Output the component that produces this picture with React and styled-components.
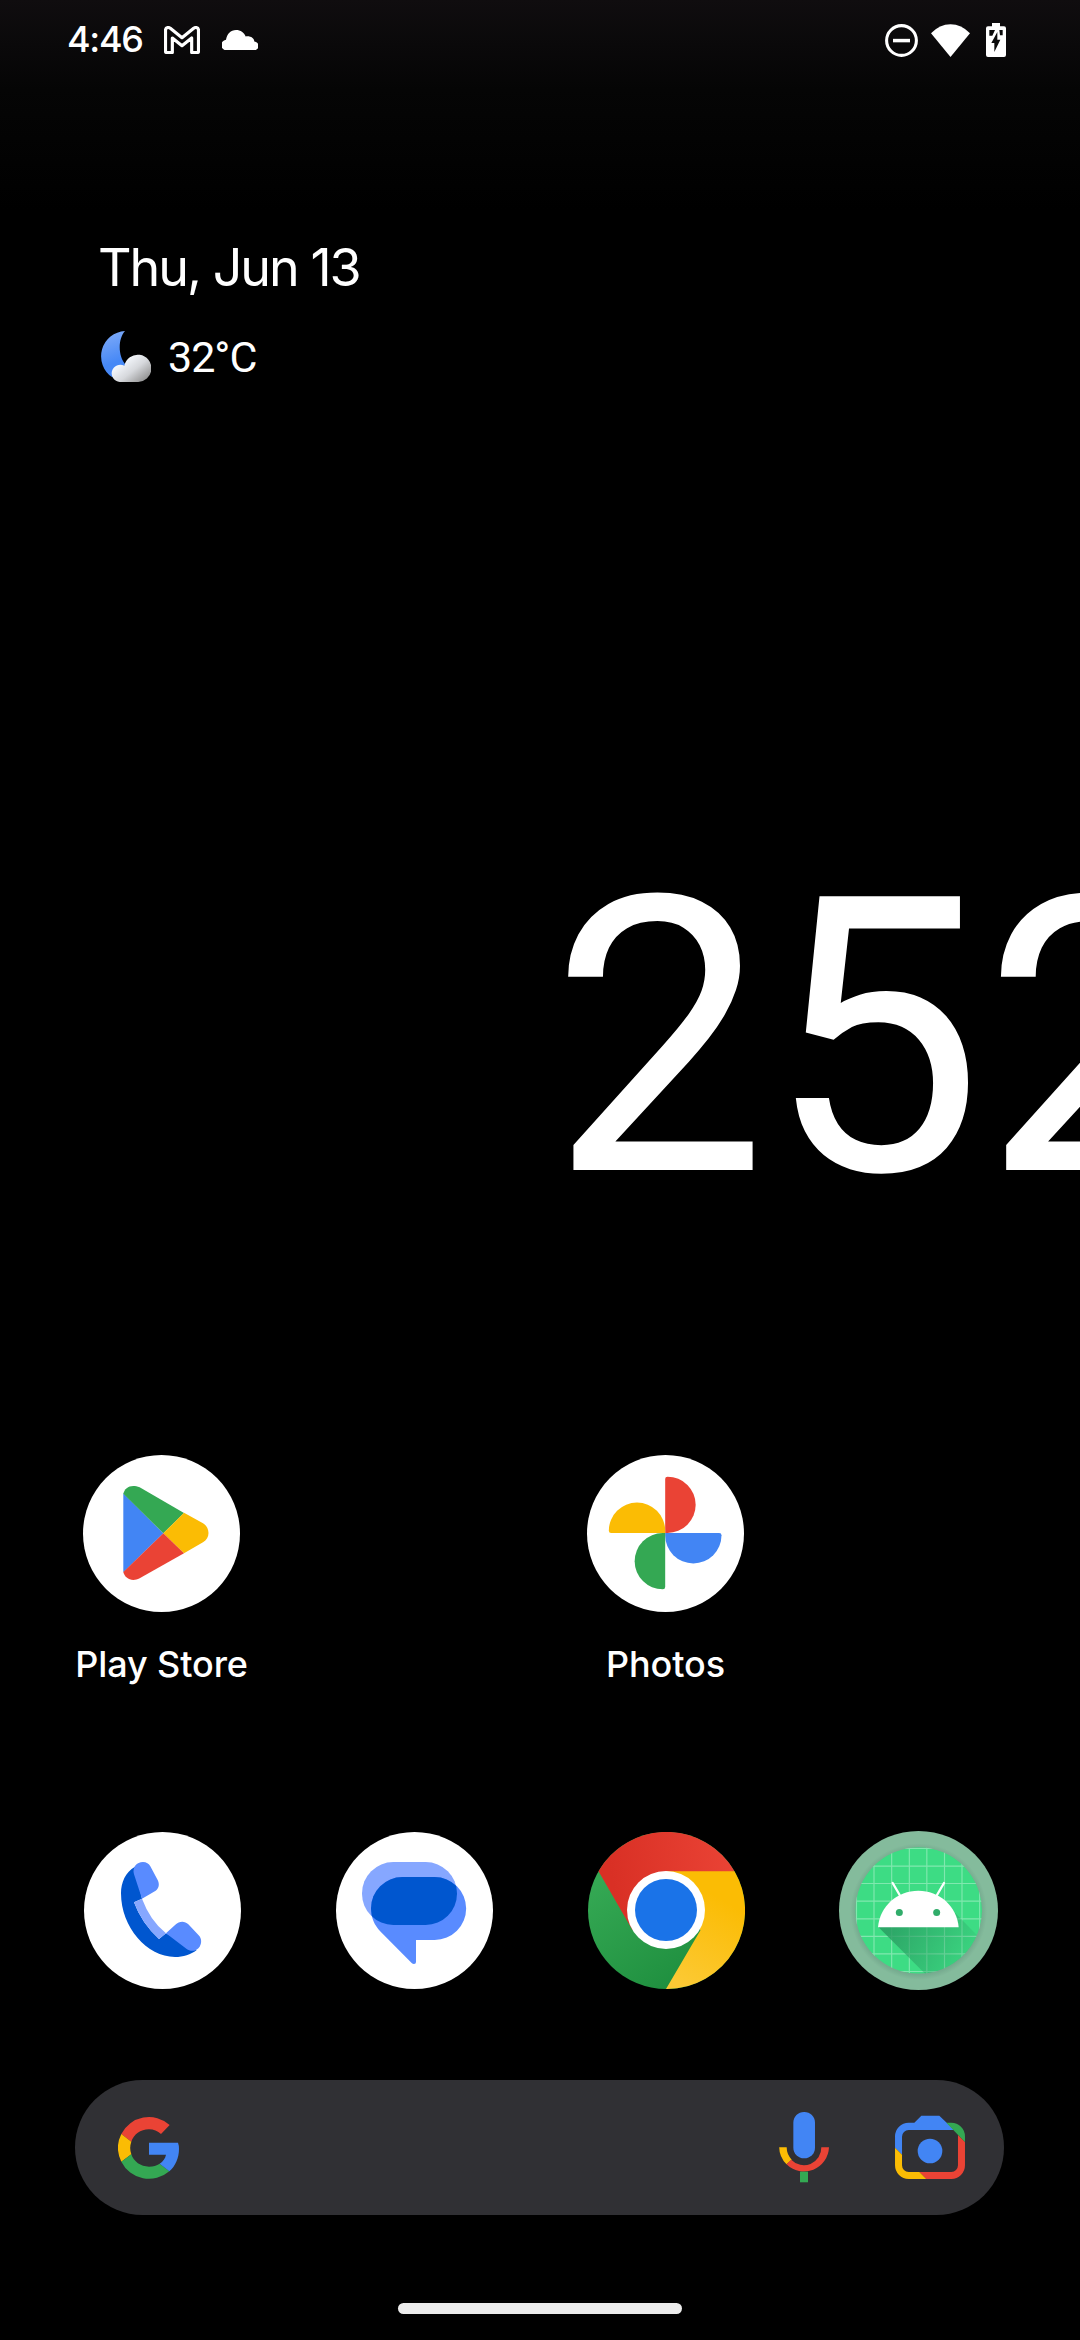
import React from "react";
import styled, { createGlobalStyle } from "styled-components";

const GlobalStyle = createGlobalStyle`
  html, body { margin: 0; padding: 0; background: #000; }
  svg { display: block; flex: none; }
`;

const Screen = styled.div`
  width: 1080px;
  height: 2340px;
  overflow: hidden;
  display: flex;
  flex-direction: column;
  color: #fff;
  background: linear-gradient(#100d0f 0, #0a090a 45px, #050505 90px, #000 210px);
  font-family: Inter, Roboto, sans-serif;
`;

const StatusBar = styled.header`
  display: flex;
  align-items: center;
  justify-content: space-between;
  height: 80px;
  padding: 0 74px 0 67px;
`;

const StatusGroup = styled.div`
  display: flex;
  align-items: center;
`;

const Time = styled.span`
  width: 97px;
  height: 80px;
  font-size: 36px;
  font-weight: 550;
  line-height: 79px;
  letter-spacing: -1.3px;
`;

const StatusIcon = styled.svg`
  width: ${(p) => p.$w}px;
  height: ${(p) => p.$h}px;
  margin-left: ${(p) => p.$gap || 0}px;
  fill: #fff;
`;

const Glance = styled.section`
  display: flex;
  flex-direction: column;
  gap: 30px;
  margin-top: 156px;
  padding-left: 98px;
`;

const DateLine = styled.div`
  height: 64px;
  font-size: 52px;
  line-height: 64px;
  letter-spacing: -2px;
  white-space: pre;
`;

const Weather = styled.div`
  display: flex;
  align-items: center;
  gap: 17px;
  height: 52px;
  padding-left: 2px;
`;

const Temperature = styled.span`
  height: 52px;
  font-family: Roboto, sans-serif;
  font-size: 43px;
  line-height: 54px;
  letter-spacing: -1px;
`;

const Counter = styled.div`
  height: 400px;
  margin-top: 457px;
  padding-left: 550.5px;
  white-space: nowrap;
  font-family: Roboto, sans-serif;
  font-size: 385px;
  line-height: 400px;
`;

const IconRow = styled.div`
  display: grid;
  grid-template-columns: repeat(4, 252px);
  align-items: center;
  justify-items: center;
  margin-top: ${(p) => p.$top}px;
  padding-left: ${(p) => p.$left}px;
`;

const Shortcut = styled.div`
  display: flex;
  flex-direction: column;
  align-items: center;
  gap: 28px;
  grid-column: ${(p) => p.$column};
`;

const Label = styled.span`
  height: 48px;
  font-size: 36px;
  font-weight: 550;
  line-height: 48px;
  letter-spacing: -0.1px;
  white-space: nowrap;
`;

const LauncherIcon = styled.svg`
  width: ${(p) => p.$size || 157}px;
  height: ${(p) => p.$size || 157}px;
`;

const SearchBar = styled.div`
  display: flex;
  align-items: center;
  justify-content: space-between;
  width: 929px;
  height: 135px;
  margin: 90px 0 0 75px;
  padding: 0 39px 0 43px;
  box-sizing: border-box;
  border-radius: 68px;
  background: #303034;
`;

const SearchActions = styled.div`
  display: flex;
  align-items: center;
  gap: 66px;
`;

const NavHandle = styled.div`
  width: 284px;
  height: 11px;
  margin: 88px auto 0;
  border-radius: 6px;
  background: #ececec;
`;

const GmailIcon = () => (
  <StatusIcon $w={36} $h={28} viewBox="372 75 108 84">
    <path
      d="M376.500 88V151Q376.500 154.500 380 154.500H397V111L426 134L455 111V154.500H472Q475.500 154.500 475.500 151V88Q475.500 79.500 467 79.500Q464 79.500 461 82L426 110L391 82Q388 79.500 385 79.500Q376.500 79.500 376.500 88Z"
      fill="none" stroke="#fff" strokeWidth="9.5" strokeLinejoin="round"
    />
  </StatusIcon>
);

const CloudIcon = () => (
  <StatusIcon $w={36} $h={20.5} $gap={22} viewBox="546 86 108 61">
    <path d="M562 147A16 16 0 0 1 558 115C561 98 572 86 588 86C602 86 612 94 617 105C632 103 642 110 643 120A13.500 13.500 0 0 1 641 147Z" />
  </StatusIcon>
);

const DndIcon = () => (
  <StatusIcon $w={33} $h={33} viewBox="75 72 99 99">
    <circle cx="124.500" cy="121.500" r="44.700" fill="none" stroke="#fff" strokeWidth="9.200" />
    <path d="M99 116.500H150V127H99Z" />
  </StatusIcon>
);

const WifiIcon = () => (
  <StatusIcon $w={39} $h={33} $gap={13} viewBox="213 68 117 99">
    <path d="M271.500 167L213 96Q239 69 271.500 69T330 96Z" />
  </StatusIcon>
);

const BatteryIcon = () => (
  <StatusIcon $w={20} $h={34} $gap={16} viewBox="378 69 60 102">
    <path d="M396 69H420V79H432Q438 79 438 85V165Q438 171 432 171H384Q378 171 378 165V85Q378 79 384 79H396Z" />
    <path fill="#0a0a0a" d="M388 90H405L397 107H388ZM418 90H428V106H420ZM412 96V119H421L403 156V129H394Z" />
  </StatusIcon>
);

const MoonCloudIcon = () => (
  <svg width="51" height="51" viewBox="60 333 153 153">
    <defs>
      <linearGradient id="moon" x1="0.3" y1="0" x2="0.5" y2="1">
        <stop offset="0" stopColor="#7fabf8" />
        <stop offset="0.7" stopColor="#4688f6" />
      </linearGradient>
      <linearGradient id="cloud" x1="0.1" y1="0.2" x2="0.9" y2="0.9">
        <stop offset="0.15" stopColor="#f5f8fd" />
        <stop offset="0.55" stopColor="#d6d8dc" />
        <stop offset="1" stopColor="#909090" />
      </linearGradient>
    </defs>
    <path fill="url(#moon)" d="M135 333C114 356 113 408 137 434L97 472A76 76 0 0 1 135 333Z" />
    <path fill="url(#cloud)" d="M119 486A26 26 0 1 1 133 437A41 41 0 1 1 172 486Z" />
  </svg>
);

const PlayStoreIcon = () => (
  <LauncherIcon viewBox="70 45 471 471">
    <circle cx="305.500" cy="280.500" r="235.500" fill="#fff" />
    <path fill="#4285f4" d="M191 160L311 280L191 397Z" />
    <path fill="#34a853" d="M191 161C195 143 214 131 240 142L373 219L311 280Z" />
    <path fill="#fbbc04" d="M373 218.500L430 250C452 263 452 295 430 307L373 339.500L311 280Z" />
    <path fill="#ea4335" d="M191 396L311 280L373 339.500L240 415C215 427 195 414 191 396Z" />
  </LauncherIcon>
);

const PETALS = [["#ea4335", 0], ["#4285f4", 90], ["#34a853", 180], ["#fbbc04", 270]];

const PhotosIcon = () => (
  <LauncherIcon viewBox="51 45 471 471">
    <circle cx="286.500" cy="280.500" r="235.500" fill="#fff" />
    {PETALS.map(([color, angle]) => (
      <path
        key={color} fill={color}
        transform={`rotate(${angle} 285.5 279)`}
        d="M285.500 279V117Q285.500 110 292.500 110A84.500 84.500 0 0 1 292.500 279Z"
      />
    ))}
  </LauncherIcon>
);

const PhoneIcon = () => (
  <LauncherIcon viewBox="42 36 471 471">
    <circle cx="277.500" cy="271.500" r="235.500" fill="#fff" />
    <path fill="#0056cf" d="M195 140C166 157 153 187 153 220C153 322 231 411 315 411C340 411 362 404 380 390L288 340L267 357Q215 310 192 247L216 236Z" />
    <path fill="#86a7ff" d="M216 236L192 247Q215 310 267 357L288 340Q240 301 216 236Z" />
    <path fill="#598bff" d="M216 236L192 163C186 142 200 126 219 126C229 126 237 131 241 139L263 180C269 192 267 205 257 212Z" />
    <path fill="#598bff" d="M288 340L316 314C328 303 344 302 355 313L386 346C396 356 395 371 389 380C380 394 362 396 350 387Z" />
  </LauncherIcon>
);

const MessagesIcon = () => (
  <LauncherIcon viewBox="33 36 471 471">
    <defs>
      <clipPath id="bubble">
        <rect x="111" y="126" width="285" height="189" rx="94" />
      </clipPath>
    </defs>
    <circle cx="268.500" cy="271.500" r="235.500" fill="#fff" />
    <rect x="111" y="126" width="285" height="189" rx="94" fill="#86a7ff" />
    <path fill="#598bff" d="M232 171H329A94.500 94.500 0 0 1 329 360H273V426Q273 432 267 432Q263 432 260 429L167 335C148 316 138 293 138 265A94 94 0 0 1 232 171Z" />
    <rect x="138" y="171" width="285" height="189" rx="94" fill="#0056cf" clipPath="url(#bubble)" />
  </LauncherIcon>
);

const ChromeIcon = () => (
  <LauncherIcon viewBox="39 36 471 471">
    <defs>
      <linearGradient id="cred" x1="0" y1="0.5" x2="1" y2="0.4">
        <stop offset="0.1" stopColor="#d93025" />
        <stop offset="1" stopColor="#ea4335" />
      </linearGradient>
      <linearGradient id="cgreen" x1="0.1" y1="0.3" x2="0.6" y2="1">
        <stop offset="0" stopColor="#34a853" />
        <stop offset="1" stopColor="#1e8e3e" />
      </linearGradient>
      <linearGradient id="cyellow" x1="0.6" y1="0.2" x2="0.3" y2="1">
        <stop offset="0" stopColor="#fbbc04" />
        <stop offset="1" stopColor="#fcc934" />
      </linearGradient>
    </defs>
    <circle cx="274.500" cy="271.500" r="235.500" fill="url(#cgreen)" />
    <path fill="url(#cred)" d="M70.500 153.500A235.500 235.500 0 0 1 478.500 153.500L274.500 200L172.600 330.400Z" />
    <path fill="url(#cyellow)" d="M274.500 153.500H478.500A235.500 235.500 0 0 1 273 507L376.400 330.400Z" />
    <circle cx="273" cy="270" r="117" fill="#fff" />
    <circle cx="273" cy="270" r="93" fill="#1a73e8" />
  </LauncherIcon>
);

const AndroidIcon = () => (
  <LauncherIcon $size={159} viewBox="27 33 477 477">
    <defs>
      <clipPath id="disc"><circle cx="266" cy="271.500" r="190" /></clipPath>
      <linearGradient id="cast" gradientUnits="userSpaceOnUse" x1="190" y1="310" x2="400" y2="430">
        <stop offset="0" stopColor="#2a9d62" stopOpacity="0.85" />
        <stop offset="1" stopColor="#2a9d62" stopOpacity="0.15" />
      </linearGradient>
      <radialGradient id="rim" gradientUnits="userSpaceOnUse" cx="266" cy="275" r="205">
        <stop offset="0.92" stopColor="#76ab8f" />
        <stop offset="1" stopColor="#84bb9c" />
      </radialGradient>
    </defs>
    <circle cx="265.500" cy="271.500" r="238.500" fill="url(#rim)" />
    <g clipPath="url(#disc)">
      <circle cx="266" cy="271.500" r="190" fill="#3ddc84" />
      <path
        fill="none" stroke="#fff" strokeOpacity="0.35" strokeWidth="3.500"
        d="M79.500 80V470M132 80V470M185 80V470M238 80V470M290.500 80V470M343.500 80V470M396 80V470M449 80V470M70 85.500H460M70 138.500H460M70 190.500H460M70 243.500H460M70 296.500H460M70 349H460M70 401.500H460M70 454.500H460"
      />
      <path fill="url(#cast)" d="M145 321L300 476H480V385L375 278Z" />
    </g>
    <path stroke="#fff" strokeWidth="7" strokeLinecap="round" d="M188 189L209 225M342 189L321 225" />
    <path fill="#fff" d="M144 322C149 258 202 212 265 212S381 258 386 322Z" />
    <circle cx="208" cy="277.500" r="10.500" fill="#30ac6a" />
    <circle cx="320" cy="277.500" r="10.500" fill="#30ac6a" />
  </LauncherIcon>
);

const GoogleIcon = () => (
  <svg width="61" height="62" viewBox="174 168 183 186">
    <path fill="#ea4335" d="M329 192A93 93 0 0 0 184 219L214 242C221 221 241 205 267 205C281 205 293 210 303 219Z" />
    <path fill="#fbbc04" d="M184 219A93 93 0 0 0 184 302L214 280A56 56 0 0 1 214 242Z" />
    <path fill="#34a853" d="M184 302A93 93 0 0 0 328 331L299 308C290 314 280 317 267 317C242 317 221 302 214 280Z" />
    <path fill="#4285f4" d="M267 245H354Q357 253 357 263C357 291 346 315 328 331L299 308C309 301 316 292 318 281H267Z" />
  </svg>
);

const MicIcon = () => (
  <svg width="50" height="70.300" viewBox="357 158 150 211">
    <rect x="400" y="158" width="65" height="139" rx="32" fill="#4285f4" />
    <path fill="#fbbc04" d="M357.500 264H380Q380 285 395 301L379.500 315Q358 294 357.500 264Z" />
    <path fill="#ea4335" d="M393.500 301.500A52.500 52.500 0 0 0 484 264H507A75 75 0 0 1 379.500 315Z" />
    <rect x="420" y="337" width="24" height="32" fill="#34a853" />
  </svg>
);

const LensIcon = () => (
  <svg width="70" height="64.300" viewBox="705 165 210 193">
    <path fill="#4285f4" d="M705 263V229A41 41 0 0 1 746 188H763L784 167H838L883 210H746A20 20 0 0 0 726 230V284Z" />
    <path fill="#34a853" d="M859 188H874A41 41 0 0 1 915 229V247L880 210Z" />
    <path fill="#ea4335" d="M915 247V316A41 41 0 0 1 874 357H799L778 336H874A20 20 0 0 0 894 316V225Z" />
    <path fill="#fbbc04" d="M705 263L726 284V316A20 20 0 0 0 746 336H778L799 357H746A41 41 0 0 1 705 316Z" />
    <circle cx="810" cy="273" r="37" fill="#4285f4" />
  </svg>
);

export default function App() {
  return (
    <Screen>
      <GlobalStyle />
      <StatusBar>
        <StatusGroup>
          <Time>4:46</Time>
          <GmailIcon />
          <CloudIcon />
        </StatusGroup>
        <StatusGroup>
          <DndIcon />
          <WifiIcon />
          <BatteryIcon />
        </StatusGroup>
      </StatusBar>
      <Glance>
        <DateLine>Thu, Jun 13</DateLine>
        <Weather>
          <MoonCloudIcon />
          <Temperature>32°C</Temperature>
        </Weather>
      </Glance>
      <Counter>252</Counter>
      <IconRow $top={216} $left={35.5}>
        <Shortcut $column={1}>
          <PlayStoreIcon />
          <Label>Play Store</Label>
        </Shortcut>
        <Shortcut $column={3}>
          <PhotosIcon />
          <Label>Photos</Label>
        </Shortcut>
      </IconRow>
      <IconRow as="nav" $top={143} $left={36.5}>
        <PhoneIcon />
        <MessagesIcon />
        <ChromeIcon />
        <AndroidIcon />
      </IconRow>
      <SearchBar>
        <GoogleIcon />
        <SearchActions>
          <MicIcon />
          <LensIcon />
        </SearchActions>
      </SearchBar>
      <NavHandle />
    </Screen>
  );
}
